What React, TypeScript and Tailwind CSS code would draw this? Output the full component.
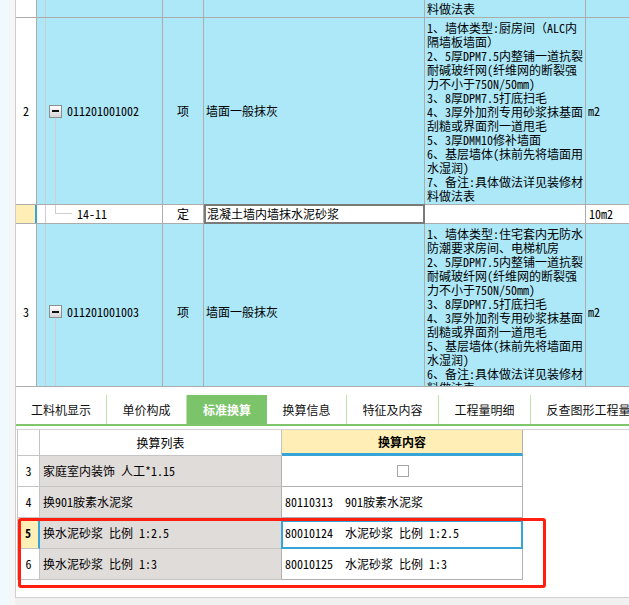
import React from "react";

const row2Feature = [
  "1、墙体类型:厨房间（ALC内",
  "隔墙板墙面）",
  "2、5厚DPM7.5内整铺一道抗裂",
  "耐碱玻纤网(纤维网的断裂强",
  "力不小于750N/50mm)",
  "3、8厚DPM7.5打底扫毛",
  "4、3厚外加剂专用砂浆抹基面",
  "刮糙或界面剂一道甩毛",
  "5、3厚DMM10修补墙面",
  "6、基层墙体(抹前先将墙面用",
  "水湿润)",
  "7、备注:具体做法详见装修材",
  "料做法表",
];

const row3Feature = [
  "1、墙体类型:住宅套内无防水",
  "防潮要求房间、电梯机房",
  "2、5厚DPM7.5内整铺一道抗裂",
  "耐碱玻纤网(纤维网的断裂强",
  "力不小于750N/50mm)",
  "3、8厚DPM7.5打底扫毛",
  "4、3厚外加剂专用砂浆抹基面",
  "刮糙或界面剂一道甩毛",
  "5、基层墙体(抹前先将墙面用",
  "水湿润)",
  "6、备注:具体做法详见装修材",
  "料做法表",
];

function Lines({ lines }: { lines: string[] }) {
  return (
    <>
      {lines.map((l, i) => (
        <div key={i} className="h-[14px] leading-[14px] whitespace-nowrap">
          {l}
        </div>
      ))}
    </>
  );
}

function Collapse() {
  return (
    <div className="relative w-[13px] h-[13px] shrink-0 border border-[#8e8e8e] bg-gradient-to-b from-white to-[#d4d4d4] flex items-center justify-center">
      <div className="w-[7px] h-[2px] bg-[#111]" />
    </div>
  );
}

function ItemRow({
  num,
  code,
  feature,
  h,
}: {
  num: string;
  code: string;
  feature: string[];
  h: string;
}) {
  return (
    <div className={`flex ${h} shrink-0 border-b border-[#acacac]`}>
      <div className="w-[21px] shrink-0 border-r border-[#acacac] bg-white flex items-center justify-center">
        {num}
      </div>
      <div className="relative w-[126px] shrink-0 border-r border-[#acacac] bg-[#ade8f9] flex items-center pl-[12px]">
        <div className="absolute left-[8px] top-0 bottom-0 w-px bg-[#cfcfcf]" />
        <div className="absolute left-[18px] top-[calc(50%+7px)] bottom-0 w-px bg-[#cfcfcf]" />
        <Collapse />
        <span className="ml-[5px]">{code}</span>
      </div>
      <div className="w-[41px] shrink-0 border-r border-[#acacac] bg-[#ade8f9] flex items-center justify-center">
        项
      </div>
      <div className="w-[221px] shrink-0 border-r border-[#acacac] bg-[#ade8f9] flex items-center pl-[2px]">
        墙面一般抹灰
      </div>
      <div className="w-[161px] shrink-0 border-r border-[#acacac] bg-[#ade8f9] pl-[2px] pt-[3px] overflow-hidden">
        <Lines lines={feature} />
      </div>
      <div className="flex-1 bg-[#ade8f9] flex items-center pl-[2px]">m2</div>
    </div>
  );
}

const tabs = [
  { t: "工料机显示", w: "w-[91px]" },
  { t: "单价构成", w: "w-[80px]" },
  { t: "标准换算", w: "w-[80px]", active: true },
  { t: "换算信息", w: "w-[80px]" },
  { t: "特征及内容", w: "w-[92px]" },
  { t: "工程量明细", w: "w-[92px]" },
  { t: "反查图形工程量", w: "w-[116px]" },
];

const rows = [
  { n: "3", a: "家庭室内装饰 人工*1.15", b: null },
  { n: "4", a: "换901胺素水泥浆", b: "80110313  901胺素水泥浆" },
  { n: "5", a: "换水泥砂浆 比例 1:2.5", b: "80010124  水泥砂浆 比例 1:2.5", sel: true },
  { n: "6", a: "换水泥砂浆 比例 1:3", b: "80010125  水泥砂浆 比例 1:3" },
];

export default function App() {
  return (
    <div className="relative w-[629px] h-[605px] overflow-hidden bg-[#f0f0f0] flex text-[12px] text-black font-['Noto_Sans_Mono_CJK_SC','Noto_Sans_CJK_SC',sans-serif]">
      <div className="w-[9px] h-full shrink-0 bg-[#eefafd]" />
      <div className="w-[6px] h-full shrink-0 bg-[#f6f6f6]" />
      <div className="flex-1 min-w-0 h-[598px] flex flex-col bg-white border-l border-[#cfcfcf] border-b overflow-hidden">
        {/* top grid */}
        <div className="h-[387px] shrink-0 border-b border-[#acacac] overflow-hidden flex flex-col">
          {/* row 1 (clipped) */}
          <div className="flex h-[18px] shrink-0 border-b border-[#acacac]">
            <div className="w-[21px] shrink-0 border-r border-[#acacac] bg-white" />
            <div className="relative w-[126px] shrink-0 border-r border-[#acacac] bg-[#ade8f9]">
              <div className="absolute left-[8px] top-0 bottom-0 w-px bg-[#cfcfcf]" />
            </div>
            <div className="w-[41px] shrink-0 border-r border-[#acacac] bg-[#ade8f9]" />
            <div className="w-[221px] shrink-0 border-r border-[#acacac] bg-[#ade8f9]" />
            <div className="w-[161px] shrink-0 border-r border-[#acacac] bg-[#ade8f9] pl-[2px] flex items-end pb-[1px]">
              <div className="h-[14px] leading-[14px] whitespace-nowrap">料做法表</div>
            </div>
            <div className="flex-1 bg-[#ade8f9]" />
          </div>
          <ItemRow num="2" code="011201001002" feature={row2Feature} h="h-[187px]" />
          {/* 14-11 row */}
          <div className="flex h-[19px] shrink-0 border-b border-[#acacac] bg-white">
            <div className="w-[21px] shrink-0 border-r-2 border-[#36a4d6] bg-[#ffeeb5]" />
            <div className="relative w-[126px] shrink-0 border-r border-[#acacac] flex items-center pl-[40px]">
              <div className="absolute left-[8px] top-0 bottom-0 w-px bg-[#cfcfcf]" />
              <div className="absolute left-[18px] top-0 h-[9px] w-px bg-[#cfcfcf]" />
              <div className="absolute left-[18px] top-[8px] h-px w-[17px] bg-[#cfcfcf]" />
              <span>14-11</span>
            </div>
            <div className="w-[41px] shrink-0 border-r border-[#acacac] flex items-center justify-center">
              定
            </div>
            <div className="relative w-[221px] shrink-0 border-r border-[#acacac] flex items-center pl-[3px] whitespace-nowrap">
              <div className="absolute -top-px -bottom-px left-0 -right-px border-2 border-[#7a7a7a]" />
              混凝土墙内墙抹水泥砂浆
            </div>
            <div className="w-[161px] shrink-0 border-r border-[#acacac]" />
            <div className="flex-1 flex items-center pl-[3px]">10m2</div>
          </div>
          <ItemRow num="3" code="011201001003" feature={row3Feature} h="h-[176px]" />
        </div>

        <div className="h-[8px] shrink-0" />

        {/* tabs */}
        <div className="flex h-[31px] shrink-0 border-b-2 border-[#7fc56b] font-['Noto_Sans_CJK_SC',sans-serif] text-[12px] whitespace-nowrap">
          {tabs.map((t) =>
            t.active ? (
              <div key={t.t} className={`${t.w} shrink-0 bg-[#7cc46a] text-white font-bold flex items-center justify-center`}>
                {t.t}
              </div>
            ) : (
              <div key={t.t} className={`${t.w} shrink-0 border-r border-[#bde5a8] flex items-center justify-center text-[#111]`}>
                {t.t}
              </div>
            )
          )}
        </div>

        <div className="h-[3px] shrink-0" />

        {/* bottom panel */}
        <div className="flex-1 border-t border-[#d2d2d2] pl-px">
          <div className="flex flex-col w-[506px]">
            <div className="flex h-[26px]">
              <div className="w-[23px] shrink-0 border-l border-r border-b border-[#c4c4c4] bg-white" />
              <div className="w-[242px] shrink-0 border-r border-b border-[#c4c4c4] bg-white flex items-center justify-center font-['Noto_Sans_CJK_SC',sans-serif]">
                换算列表
              </div>
              <div className="w-[241px] shrink-0 border-r border-[#b0b0b0] border-b-[3px] border-b-[#36a4d6] bg-[#ffeeb5] flex items-center justify-center font-bold font-['Noto_Sans_CJK_SC',sans-serif]">
                换算内容
              </div>
            </div>
            {rows.map((r) => (
              <div key={r.n} className="flex h-[31px]">
                <div
                  className={
                    r.sel
                      ? "w-[23px] shrink-0 border-l border-l-[#c4c4c4] border-r-2 border-r-[#36a4d6] border-b border-b-[#c4c4c4] bg-[#ffeeb5] flex items-center justify-center font-bold"
                      : "w-[23px] shrink-0 border-l border-r border-b border-[#c4c4c4] bg-white flex items-center justify-center"
                  }
                >
                  {r.n}
                </div>
                <div className="w-[242px] shrink-0 border-r border-r-[#b0b0b0] border-b border-b-[#c4c4c4] bg-[#e0dcda] flex items-center pl-[3px] whitespace-pre">
                  {r.a}
                </div>
                <div className="relative w-[241px] shrink-0 border-r border-b border-[#b0b0b0] bg-white flex items-center pl-[3px] whitespace-pre">
                  {r.sel && (
                    <div className="absolute top-[2px] -bottom-px -left-px -right-px border-2 border-[#36a4d6]" />
                  )}
                  {r.b === null ? (
                    <div className="mx-auto -translate-x-[1px] w-[12px] h-[12px] border border-[#a6a6a6] bg-white" />
                  ) : (
                    r.b
                  )}
                </div>
              </div>
            ))}
          </div>
        </div>
      </div>

      {/* red annotation box */}
      <div className="absolute left-[18px] top-[518px] w-[528px] h-[70px] border-[3px] border-[#ff1e10] rounded-[3px] pointer-events-none" />
    </div>
  );
}
